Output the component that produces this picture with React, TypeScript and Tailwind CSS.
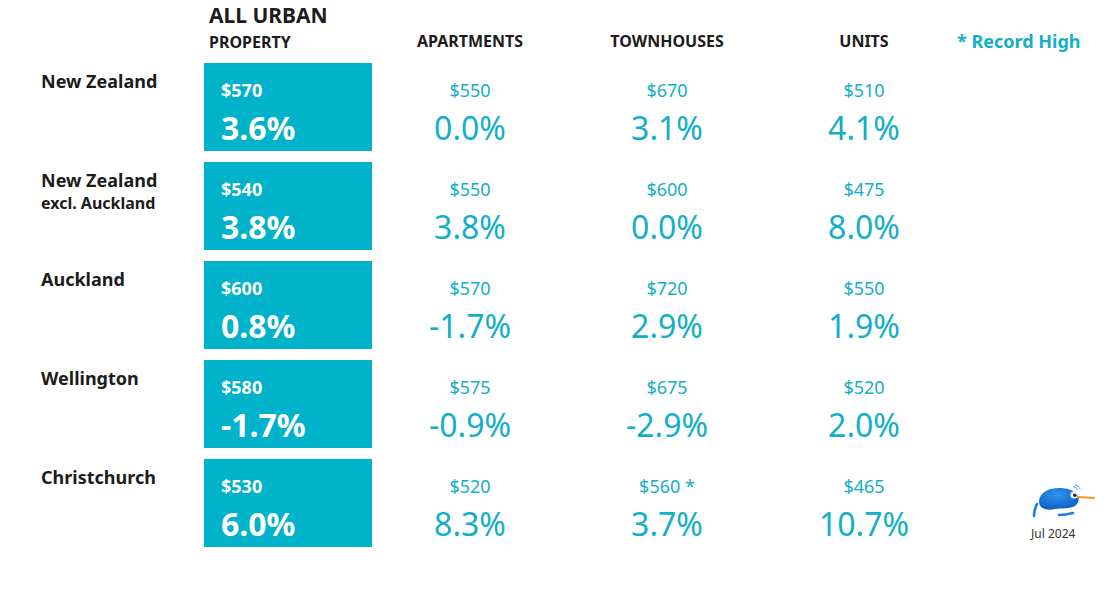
const rows = [
  { name: "New Zealand", sub: "", all: ["$570", "3.6%"], apt: ["$550", "0.0%"], town: ["$670", "3.1%"], unit: ["$510", "4.1%"] },
  { name: "New Zealand", sub: "excl. Auckland", all: ["$540", "3.8%"], apt: ["$550", "3.8%"], town: ["$600", "0.0%"], unit: ["$475", "8.0%"] },
  { name: "Auckland", sub: "", all: ["$600", "0.8%"], apt: ["$570", "-1.7%"], town: ["$720", "2.9%"], unit: ["$550", "1.9%"] },
  { name: "Wellington", sub: "", all: ["$580", "-1.7%"], apt: ["$575", "-0.9%"], town: ["$675", "-2.9%"], unit: ["$520", "2.0%"] },
  { name: "Christchurch", sub: "", all: ["$530", "6.0%"], apt: ["$520", "8.3%"], town: ["$560 *", "3.7%"], unit: ["$465", "10.7%"] },
];

function Kiwi() {
  return (
    <svg width="66" height="36" viewBox="0 0 66 36">
      <defs>
        <radialGradient id="kb" cx="0.45" cy="0.3" r="0.75">
          <stop offset="0" stopColor="#2f95ec" />
          <stop offset="1" stopColor="#0a5cc2" />
        </radialGradient>
      </defs>
      <path d="M8 20 C6 24 5 28 5 32" stroke="#1d7fe0" strokeWidth="2.6" fill="none" strokeLinecap="round" />
      <path d="M30 31 C36 31 40 30 44 29" stroke="#1d7fe0" strokeWidth="2.6" fill="none" strokeLinecap="round" />
      <path d="M10 17 C11 8 20 4 30 4 C38 4 44 6 48 10 C51 14 50 19 46 22 C41 25 32 24 26 25 C18 27 10 25 10 17 Z" fill="url(#kb)" />
      <circle cx="45" cy="11" r="3.6" fill="#fff" />
      <circle cx="45.8" cy="11.2" r="1.7" fill="#0b2b55" />
      <path d="M49 13 L65 14" stroke="#f0a020" strokeWidth="1.8" strokeLinecap="round" />
      <path d="M44 3 C46 2.5 48 4 48.5 6" stroke="#3d9cf0" strokeWidth="1" fill="none" />
      <path d="M46 1 C48.5 1 50.5 3 51 5" stroke="#3d9cf0" strokeWidth="1" fill="none" />
    </svg>
  );
}

function Cell({ v }: { v: string[] }) {
  return (
    <div className="flex flex-col items-center pt-[15px] text-[#13aec8]">
      <div className="text-[18px] leading-[24px]">{v[0]}</div>
      <div className="text-[32px] leading-[40px] mt-[6px]">{v[1]}</div>
    </div>
  );
}

export default function App() {
  return (
    <div className="w-[1119px] h-[594px] bg-white relative" style={{ fontFamily: '"Noto Sans", "Open Sans", sans-serif' }}>
      <div className="grid grid-cols-[163px_168px_196px_198px_196px_1fr] pl-[41px] text-[#1c1c1c]">
        <div />
        <div className="pl-[5px] pt-[1px]">
          <div className="text-[21px] font-bold leading-[28px]">ALL URBAN</div>
          <div className="text-[16px] font-bold leading-[22px] mt-[2px]">PROPERTY</div>
        </div>
        <div className="text-center text-[16px] font-bold pt-[30px] leading-[22px]">APARTMENTS</div>
        <div className="text-center text-[16px] font-bold pt-[30px] leading-[22px]">TOWNHOUSES</div>
        <div className="text-center text-[16px] font-bold pt-[30px] leading-[22px]">UNITS</div>
        <div className="text-[18px] font-bold text-[#13aec8] pt-[29px] -ml-[5px] leading-[24px]">* Record High</div>
      </div>
      <div className="mt-[10px] flex flex-col gap-[11px] pl-[41px]">
        {rows.map((r, i) => (
          <div key={i} className="grid grid-cols-[163px_168px_196px_198px_196px_1fr] h-[88px]">
            <div className="pt-[6px] font-bold text-[#1c1c1c]">
              <div className="text-[18px] leading-[24px]">{r.name}</div>
              {r.sub && <div className="text-[16px] leading-[22px]">{r.sub}</div>}
            </div>
            <div className="bg-[#00b2ca] text-white pl-[17px] pt-[15px]">
              <div className="text-[18px] font-bold leading-[24px]">{r.all[0]}</div>
              <div className="text-[32px] font-bold leading-[40px] mt-[6px]">{r.all[1]}</div>
            </div>
            <Cell v={r.apt} />
            <Cell v={r.town} />
            <Cell v={r.unit} />
            {i === 4 ? (
              <div className="flex flex-col items-start pl-[67px] pt-[25px]">
                <Kiwi />
                <div className="text-[12px] text-[#333] mt-[6px] pl-[2px] leading-[16px]">Jul 2024</div>
              </div>
            ) : (
              <div />
            )}
          </div>
        ))}
      </div>
    </div>
  );
}
